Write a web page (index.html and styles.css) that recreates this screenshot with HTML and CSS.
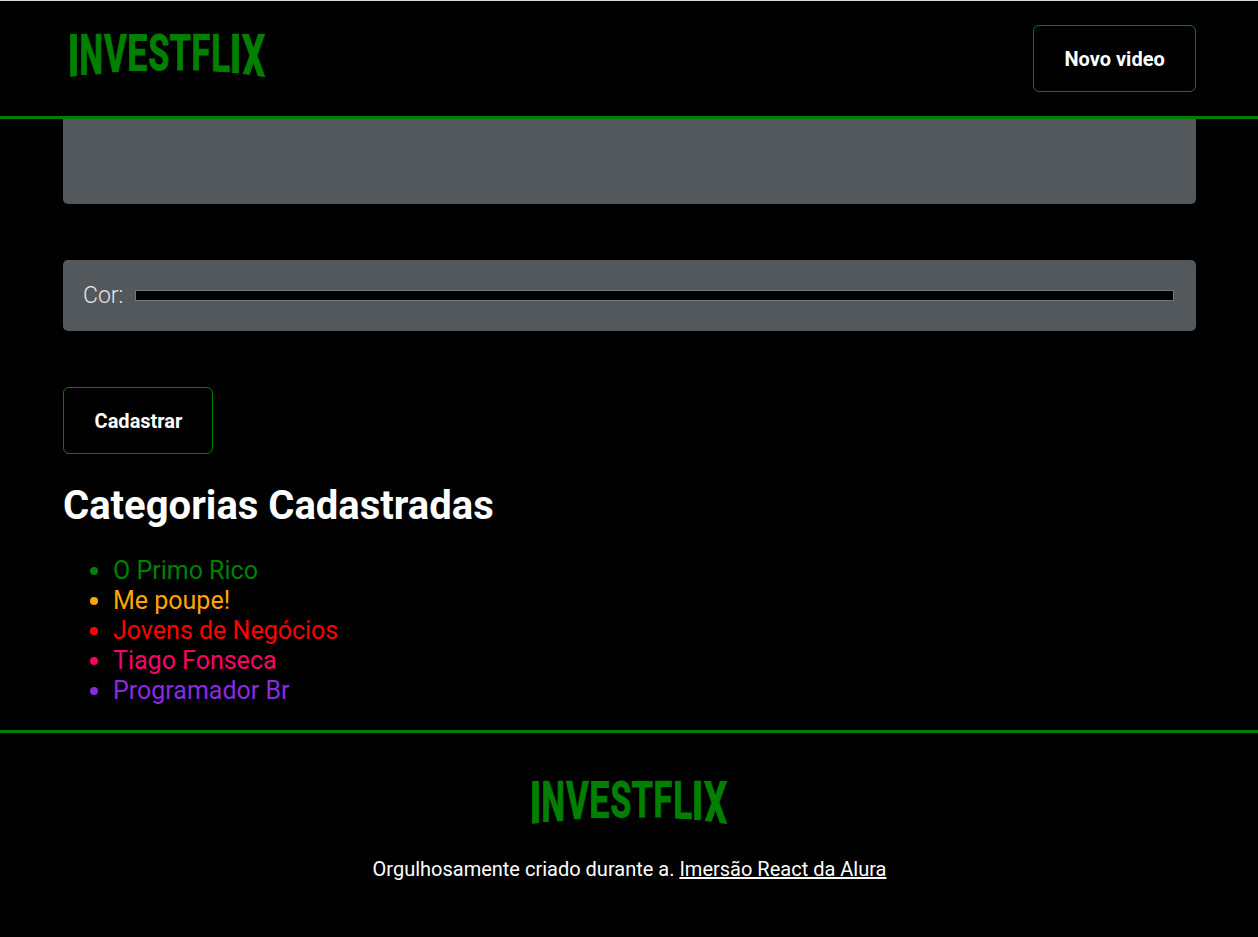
FILE: index.html
```html
<!DOCTYPE html>
<html lang="pt-BR">
<head>
<meta charset="utf-8">
<title>Investflix</title>
<link rel="stylesheet" href="styles.css">
</head>
<body>
<svg class="defs" width="0" height="0">
  <defs>
    <clipPath id="arch"><path d="M0 41H280V38H342V41H660V174L631 171L560 161L525 158L474 154L400 152L342 154H280L222 153L165 158L139 162L78 166L46 170L0 174Z"/></clipPath>
    <symbol id="logo" viewBox="0 0 660 195">
      <g class="letters" clip-path="url(#arch)">
        <text transform="translate(38.4 170) scale(1.2 1.8)">I</text>
        <text transform="translate(73.2 166) scale(1.003 1.74)">N</text>
        <text transform="translate(146.8 156.5) scale(1.048 1.61)">V</text>
        <text transform="translate(216.9 151.5) scale(1.074 1.54)">E</text>
        <text transform="translate(280.8 150.5) scale(1.01 1.5)">S</text>
        <text transform="translate(343.2 149.5) scale(1.035 1.51)">T</text>
        <text transform="translate(409.2 151) scale(1.02 1.53)">F</text>
        <text transform="translate(469 156) scale(1.037 1.6)">L</text>
        <text transform="translate(524.4 160) scale(1.2 1.66)">I</text>
        <text transform="translate(560 170) scale(1.105 1.8)">X</text>
      </g>
    </symbol>
  </defs>
</svg>
<header class="menu">
  <svg class="logo" role="img" aria-label="Investflix"><use href="#logo"/></svg>
  <a class="button">Novo video</a>
</header>
<main class="content">
  <div class="field field-text"></div>
  <label class="field field-color"><span class="label">Cor:</span><span class="swatch"></span></label>
  <button class="button submit">Cadastrar</button>
  <h1 class="title">Categorias Cadastradas</h1>
  <ul class="categories">
    <li class="green">O Primo Rico</li>
    <li class="orange">Me poupe!</li>
    <li class="red">Jovens de Negócios</li>
    <li class="pink">Tiago Fonseca</li>
    <li class="violet">Programador Br</li>
  </ul>
</main>
<footer class="footer">
  <svg class="logo" role="img" aria-label="Investflix"><use href="#logo"/></svg>
  <p class="credit">Orgulhosamente criado durante a. <a class="link">Imersão React da Alura</a></p>
</footer>
</body>
</html>
```
FILE: styles.css
```css
* { box-sizing: border-box; }
body {
  margin: 0;
  height: 937px;
  overflow: hidden;
  background: #000;
  color: #fff;
  font-family: Roboto, sans-serif;
}
.defs { display: block; height: 0; }
.letters {
  fill: #008000;
  stroke: #008000;
  stroke-width: 2px;
  font: 700 100px Roboto, sans-serif;
  text-rendering: geometricPrecision;
}
.logo { display: block; width: 220px; height: 65px; }
.menu {
  display: flex;
  justify-content: space-between;
  align-items: flex-start;
  height: 119px;
  padding: 19px 62px 0 55px;
  border-top: 1px solid #d8dadd;
  border-bottom: 3px solid #008000;
}
.button {
  display: block;
  height: 67px;
  margin: 0;
  padding: 1px 29px 0 30.5px;
  border: 1px solid #008000;
  border-radius: 6px;
  background: #000;
  color: #fff;
  font: 700 20px/65px Roboto, sans-serif;
  white-space: nowrap;
}
.menu .button { width: 163px; margin-top: 5px; }
.submit { width: 150px; padding-left: 30px; }
.content { height: 611px; padding: 0 62px 0 63px; }
.field { display: flex; background: #53585d; border-radius: 5px; }
.field-text { height: 85px; margin-bottom: 56px; border-radius: 0 0 5px 5px; }
.field-color {
  align-items: center;
  height: 71px;
  margin-bottom: 56px;
  padding: 0 22px 0 20px;
}
.label {
  width: 52px;
  padding-bottom: 1px;
  color: #e5e5e5;
  font-size: 23px;
  font-weight: 300;
}
.swatch { flex: 1; height: 11px; background: #000; border: 1px solid #767676; }
.title { margin: 28px 0 27px; font-size: 40px; line-height: 47px; }
.categories {
  margin: 0;
  padding-left: 50px;
  list-style: none;
  font-size: 25px;
  line-height: 30px;
}
.categories li::before {
  content: "";
  display: inline-block;
  width: 8px;
  height: 8px;
  margin: 0 15px 0 -23px;
  border-radius: 50%;
  background: currentColor;
  vertical-align: 4px;
}
.green { color: #008000; }
.orange { color: #ffa500; }
.red { color: #ff0000; }
.pink { color: #ff0066; }
.violet { color: #8a2be2; }
.footer {
  display: flex;
  flex-direction: column;
  align-items: center;
  height: 207px;
  padding-top: 34px;
  border-top: 3px solid #008000;
}
.footer .logo { margin-right: 4px; }
.credit { margin: 25px 0 0 1px; font-size: 20px; line-height: 24px; }
.link { text-decoration: underline; }
```
